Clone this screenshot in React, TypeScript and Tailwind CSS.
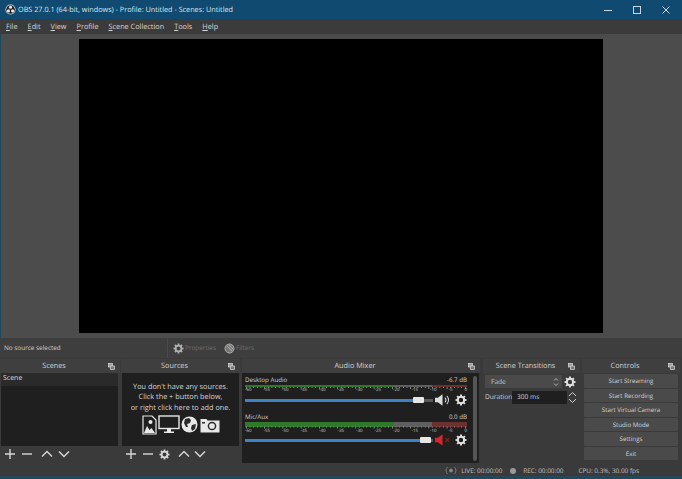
const menus = ["File", "Edit", "View", "Profile", "Scene Collection", "Tools", "Help"]
const controls = ["Start Streaming", "Start Recording", "Start Virtual Camera", "Studio Mode", "Settings", "Exit"]
const scale = ["-60", "-55", "-50", "-45", "-40", "-35", "-30", "-25", "-20", "-15", "-10", "-5", "0"]

function Gear({ size = 12, color = "#e2e2e2" }: { size?: number; color?: string }) {
  return (
    <svg width={size} height={size} viewBox="0 0 14 14" fill="none" stroke={color} className="shrink-0">
      <circle cx="7" cy="7" r="3.7" strokeWidth="2.3" />
      {[0, 45, 90, 135, 180, 225, 270, 315].map((a) => (
        <path key={a} d="M7 3V0.6" strokeWidth="2.2" transform={`rotate(${a} 7 7)`} />
      ))}
    </svg>
  )
}

function ObsLogo() {
  return (
    <svg width="11" height="11" viewBox="0 0 24 24" className="shrink-0">
      <circle cx="12" cy="12" r="11" fill="#e8e8e8" />
      <circle cx="12" cy="12" r="9.5" fill="#222" />
      <circle cx="12" cy="7" r="3.4" fill="#e8e8e8" />
      <circle cx="7.5" cy="15" r="3.4" fill="#e8e8e8" />
      <circle cx="16.5" cy="15" r="3.4" fill="#e8e8e8" />
    </svg>
  )
}

function DockIcon() {
  return (
    <svg width="7" height="7" viewBox="0 0 7 7" className="shrink-0">
      <rect x="0.5" y="0.5" width="4" height="3.5" fill="#9a9a9a" stroke="#ddd" strokeWidth="0.7" />
      <rect x="2.5" y="3" width="4" height="3.5" fill="#777" stroke="#ddd" strokeWidth="0.7" />
    </svg>
  )
}

function DockTitle({ title }: { title: string }) {
  return (
    <div className="h-[14px] shrink-0 flex items-center bg-[#3f3f3f] pr-[5px] text-[#d0d0d0] text-[7.3px]">
      <span className="flex-1 text-center pt-[1px]">{title}</span>
      <DockIcon />
    </div>
  )
}

function Plus() {
  return (
    <svg width="12" height="12" viewBox="0 0 12 12" stroke="#d8d8d8" strokeWidth="1.4">
      <path d="M6 1v10M1 6h10" />
    </svg>
  )
}

function Minus() {
  return (
    <svg width="12" height="12" viewBox="0 0 12 12" stroke="#d8d8d8" strokeWidth="1.4">
      <path d="M1 6h10" />
    </svg>
  )
}

function Chevron({ up }: { up?: boolean }) {
  return (
    <svg width="12" height="12" viewBox="0 0 12 12" fill="none" stroke="#d8d8d8" strokeWidth="1.4">
      <path d={up ? "M1 8.5l5-5 5 5" : "M1 3.5l5 5 5-5"} />
    </svg>
  )
}

function SourceIcons() {
  return (
    <div className="flex items-center justify-center gap-[1px] mt-[2px]">
      <svg width="15" height="20" viewBox="0 0 15 20">
        <path d="M1 1h9l4 4v14H1z" fill="#1f1f1f" stroke="#e8e8e8" strokeWidth="1.2" />
        <circle cx="8.5" cy="7" r="2" fill="#e8e8e8" />
        <path d="M2 18l3-7 2.5 4 2-2 3.5 5z" fill="#e8e8e8" />
      </svg>
      <svg width="22" height="19" viewBox="0 0 22 19">
        <rect x="1" y="1" width="20" height="12.5" fill="#1f1f1f" stroke="#e8e8e8" strokeWidth="1.4" />
        <path d="M9 14h4v2.5h3V18H6v-1.5h3z" fill="#e8e8e8" />
      </svg>
      <svg width="17" height="17" viewBox="0 0 17 17">
        <circle cx="8.5" cy="8.5" r="8" fill="#e8e8e8" />
        <path d="M4 3l4-1 2 2-1 3-3 1 1 3-2 0-2-4zM11 9l4-1-1 5-3 2-1-3z" fill="#2a2a2a" />
      </svg>
      <svg width="20" height="16" viewBox="0 0 20 16" className="ml-[1px]">
        <path d="M0.5 2h6l1 1.5h12v12H0.5z" fill="#e8e8e8" />
        <circle cx="12" cy="9" r="3.6" fill="none" stroke="#2a2a2a" strokeWidth="1.5" />
        <rect x="2" y="5" width="3" height="1.5" fill="#2a2a2a" />
      </svg>
    </div>
  )
}

function Meter({ mic }: { mic?: boolean }) {
  const barH = mic ? 5 : 2
  const tickY = mic ? 4.5 : 2
  return (
    <div className="w-[222px]">
      <svg width="222" height={mic ? 7 : 5} className="block">
        <rect x="0" y="0" width="149" height={barH} fill="#2f7a2a" />
        <rect x="149" y="0" width="38" height={barH} fill="#5f5f5f" />
        <rect x="187" y="0" width="35" height={barH} fill="#6b3030" />
        {Array.from({ length: 61 }, (_, i) => (
          <rect key={i} x={1 + i * 3.65} y={tickY} width="0.7" height={i % 5 === 0 ? 2 : 1} fill="#b0b0b0" />
        ))}
      </svg>
      <div className={`flex justify-between h-[6px] text-[4.5px] leading-[6px] text-[#c4c4c4] ${mic ? "-mt-[1px]" : "-mt-[3px]"}`}>
        {scale.map((s) => (
          <span key={s}>{s}</span>
        ))}
      </div>
    </div>
  )
}

function Channel({ name, db, level, mic }: { name: string; db: string; level: number; mic?: boolean }) {
  return (
    <div className="flex flex-col">
      <div className="flex justify-between w-[222px] h-[9px] items-center text-[6.2px] text-[#d0d0d0]">
        <span>{name}</span>
        <span>{db}</span>
      </div>
      <Meter mic={mic} />
      <div className={`flex items-center h-[17px] ${mic ? "-mt-[2px]" : "-mt-[1px]"}`}>
        <div className="flex items-center w-[188px]">
          <div className="h-[3px] bg-[#3f82c4]" style={{ width: level }} />
          <div className="w-[11px] h-[6px] bg-[#e6e6e6] rounded-[1px] shrink-0" />
          <div className="h-[3px] flex-1 bg-[#5a5a5a]" />
        </div>
        {mic ? (
          <svg width="16" height="14" viewBox="0 0 17 14" className="ml-[2px]">
            <path d="M0 4.5h3L8 1v12L3 9.5H0z" fill="#d9252b" />
            <path d="M11 5l4 4M15 5l-4 4" stroke="#8c2020" strokeWidth="1.4" />
          </svg>
        ) : (
          <svg width="16" height="14" viewBox="0 0 17 14" className="ml-[2px]">
            <path d="M0 4.5h3L8 1v12L3 9.5H0z" fill="#dcdcdc" />
            <path d="M10.5 4.5a3.5 3.5 0 0 1 0 5M12.5 2.5a6.5 6.5 0 0 1 0 9" fill="none" stroke="#dcdcdc" strokeWidth="1.1" />
          </svg>
        )}
        <div className="ml-[4px]">
          <Gear size={12} />
        </div>
      </div>
    </div>
  )
}

export default function App() {
  return (
    <div className="w-[682px] h-[479px] flex flex-col overflow-hidden bg-[#3a3a3a] font-['Open_Sans',sans-serif] [text-rendering:geometricPrecision] text-[#d0d0d0]">
      {/* Title bar */}
      <div className="h-[19px] shrink-0 flex items-center bg-[#104a70] pl-[5px] text-[#dde6ec] text-[7.25px]">
        <ObsLogo />
        <span className="ml-[2px] flex-1 whitespace-nowrap pt-[1px]">OBS 27.0.1 (64-bit, windows) - Profile: Untitled - Scenes: Untitled</span>
        <div className="flex items-center gap-[21px] pr-[12px] pt-[1px]">
          <svg width="8" height="8" viewBox="0 0 8 8" stroke="#c8d6df"><path d="M0 4.5h8" /></svg>
          <svg width="8" height="8" viewBox="0 0 8 8" stroke="#c8d6df" fill="none"><rect x="0.5" y="0.5" width="7" height="7" /></svg>
          <svg width="8" height="8" viewBox="0 0 8 8" stroke="#c8d6df"><path d="M0.5 0.5l7 7M7.5 0.5l-7 7" /></svg>
        </div>
      </div>

      {/* Menu bar */}
      <div className="h-[15px] shrink-0 flex items-center gap-[10px] bg-[#3b3b3b] pl-[6px] pt-[1px] text-[7.3px] text-[#d4d4d4]">
        {menus.map((m) => (
          <span key={m}>
            <u className="underline-offset-1">{m[0]}</u>
            {m.slice(1)}
          </span>
        ))}
      </div>

      {/* Preview */}
      <div className="h-[304px] shrink-0 flex justify-center items-center bg-[#4c4c4c] border-l border-[#1f4a5c]">
        <div className="w-[524px] h-[294px] bg-black -ml-[1px]" />
      </div>

      {/* Source toolbar */}
      <div className="h-[20px] shrink-0 flex items-center bg-[#3e3e3e] pl-[4px] text-[6.4px] text-[#d0d0d0]">
        <span className="w-[163px]">No source selected</span>
        <div className="flex items-center h-full pl-[5px] border-l border-[#4a4a4a]">
          <Gear size={11} color="#b0b0b0" />
          <span className="ml-[1px] text-[#6f6f6f]">Properties</span>
          <svg width="11" height="11" viewBox="0 0 11 11" className="ml-[8px]">
            <circle cx="5.5" cy="5.5" r="4.5" fill="#777" stroke="#b0b0b0" />
            <path d="M3 3l5 5M5 2l4 4" stroke="#ccc" strokeWidth="0.7" />
          </svg>
          <span className="ml-[1px] text-[#6f6f6f]">Filters</span>
        </div>
      </div>

      {/* Docks */}
      <div className="h-[105px] shrink-0 flex pt-[1px] bg-[#3a3a3a] gap-[1px]">
        {/* Scenes */}
        <div className="w-[120px] flex flex-col">
          <DockTitle title="Scenes" />
          <div className="h-[73px] ml-[1px] mr-[2px] bg-[#1f1f1f] flex flex-col">
            <div className="h-[13px] flex items-center bg-[#2a2a2a] pl-[2px] text-[7px] text-[#dcdcdc]">Scene</div>
          </div>
          <div className="flex items-center h-[16px] pl-[4px]">
            <Plus />
            <div className="ml-[5px]"><Minus /></div>
            <div className="ml-[8px]"><Chevron up /></div>
            <div className="ml-[5px]"><Chevron /></div>
          </div>
        </div>

        {/* Sources */}
        <div className="w-[119px] flex flex-col">
          <DockTitle title="Sources" />
          <div className="h-[73px] ml-[1px] mr-[1px] bg-[#1f1f1f] flex flex-col items-center pt-[9px] text-[7.3px] leading-[10.3px] text-[#d4d4d4] text-center">
            <span>You don't have any sources.</span>
            <span>Click the + button below,</span>
            <span>or right click here to add one.</span>
            <SourceIcons />
          </div>
          <div className="flex items-center h-[16px] pl-[4px]">
            <Plus />
            <div className="ml-[5px]"><Minus /></div>
            <div className="ml-[5px]"><Gear size={11} color="#d8d8d8" /></div>
            <div className="ml-[8px]"><Chevron up /></div>
            <div className="ml-[4px]"><Chevron /></div>
          </div>
        </div>

        {/* Audio mixer */}
        <div className="w-[239px] flex flex-col pl-[1px]">
          <DockTitle title="Audio Mixer" />
          <div className="h-[90px] bg-[#1f1f1f] flex pl-[3px] pr-[2px] pt-[2.5px] mr-[1px]">
            <div className="w-[226px] flex flex-col gap-[4px]">
              <Channel name="Desktop Audio" db="-6.7 dB" level={168} />
              <Channel name="Mic/Aux" db="0.0 dB" level={175} mic />
            </div>
            <div className="w-[4px] ml-[3px] h-[85px] rounded-full bg-[#555]" />
          </div>
        </div>

        {/* Scene transitions */}
        <div className="w-[97px] ml-[2px] flex flex-col">
          <DockTitle title="Scene Transitions" />
          <div className="flex items-center h-[15px] mt-[1px] pl-[2px] gap-[2px]">
            <div className="w-[77px] h-[13px] flex items-center justify-between bg-[#4a4a4a] pl-[6px] pr-[3px] text-[6.6px] text-[#c8c8c8]">
              <span>Fade</span>
              <svg width="6" height="10" viewBox="0 0 6 10" fill="none" stroke="#c8c8c8" strokeWidth="0.8">
                <path d="M1 3.5l2-2 2 2M1 6.5l2 2 2-2" />
              </svg>
            </div>
            <Gear size={12} />
          </div>
          <div className="flex items-center h-[14px] mt-[1px] pl-[2px] text-[6.6px] text-[#d0d0d0]">
            <span className="w-[27px]">Duration</span>
            <div className="w-[55px] h-[13px] flex items-center bg-[#1f1f1f] pl-[5px]">300 ms</div>
            <svg width="9" height="13" viewBox="0 0 9 13" fill="none" stroke="#d0d0d0" className="ml-[1px]">
              <path d="M1 5l3.5-3.5L8 5M1 8l3.5 3.5L8 8" />
            </svg>
          </div>
        </div>

        {/* Controls */}
        <div className="w-[98px] ml-[1px] flex flex-col">
          <DockTitle title="Controls" />
          <div className="flex flex-col gap-[1px] mt-[1px] pl-[2px] pr-[2px]">
            {controls.map((c) => (
              <div key={c} className="h-[13.5px] flex items-center justify-center bg-[#4a4a4a] rounded-[1px] text-[6.2px] text-[#d4d4d4]">
                {c}
              </div>
            ))}
          </div>
        </div>
      </div>

      {/* Status bar */}
      <div className="h-[13px] shrink-0 flex items-center justify-end bg-[#3a3a3a] pr-[43px] pt-[2px] text-[6.4px] text-[#c4c4c4]">
        <svg width="12" height="9" viewBox="0 0 12 9" fill="none" stroke="#8a8a8a" strokeWidth="0.8">
          <path d="M2.5 1a5 5 0 0 0 0 7M9.5 1a5 5 0 0 1 0 7" />
          <circle cx="6" cy="4.5" r="1.5" fill="#8a8a8a" />
        </svg>
        <span className="ml-[4px]">LIVE: 00:00:00</span>
        <span className="ml-[8px] w-[6px] h-[6px] rounded-full bg-[#9a9a9a]" />
        <span className="ml-[7px]">REC: 00:00:00</span>
        <span className="ml-[15px]">CPU: 0.3%, 30.00 fps</span>
      </div>
      <div className="flex-1 bg-[#24485a]" />
    </div>
  )
}
